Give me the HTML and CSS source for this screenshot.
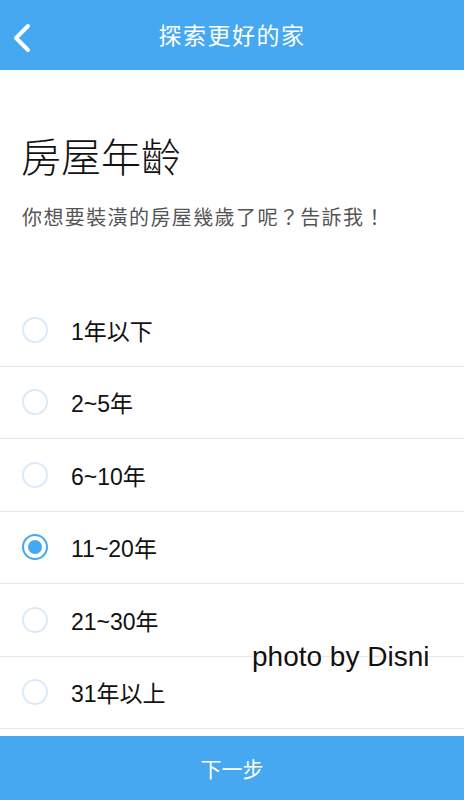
FILE: index.html
```html
<!DOCTYPE html>
<html>
  <head>
    <meta name="viewport" content="width=device-width, initial-scale=1.0" />
    <title>探索更好的家</title>
    <link rel="stylesheet" href="styles.css">
  </head>
  <body>
    <header class="topbar">
      <svg class="back" width="20" height="30" viewBox="0 0 20 30">
        <path d="M16 3 L4 15 L16 27" fill="none" stroke="#fff" stroke-width="4" stroke-linecap="round" stroke-linejoin="round" />
      </svg>
      <div class="topbar-title">探索更好的家</div>
    </header>

    <main class="content">
      <h1 class="title">房屋年齡</h1>
      <p class="subtitle">你想要裝潢的房屋幾歲了呢？告訴我！</p>

      <ul class="options">
        <li class="option"><span class="radio"></span>1年以下</li>
        <li class="option"><span class="radio"></span>2~5年</li>
        <li class="option"><span class="radio"></span>6~10年</li>
        <li class="option"><span class="radio checked"></span>11~20年</li>
        <li class="option"><span class="radio"></span>21~30年</li>
        <li class="option"><span class="radio"></span>31年以上</li>
      </ul>
      <div class="watermark">photo by Disni</div>
    </main>

    <footer class="next">下一步</footer>
  </body>
</html>
```

FILE: styles.css
```css
body {
  margin: 0;
  width: 464px;
  height: 800px;
  display: flex;
  flex-direction: column;
  background: #fff;
  font-family: "Liberation Sans", "Noto Sans CJK TC", sans-serif;
  color: #111;
  overflow: hidden;
}

.topbar {
  position: relative;
  height: 70px;
  background: #45a8f1;
  display: flex;
  align-items: center;
  justify-content: center;
}

.back {
  position: absolute;
  left: 12px;
  top: 23px;
}

.topbar-title {
  color: #fff;
  font-size: 23px;
  letter-spacing: 1.5px;
  margin-top: -2px;
}

.content {
  position: relative;
  flex: 1;
}

.title {
  margin: 58px 0 0 21px;
  font-size: 40px;
  font-weight: 300;
  line-height: 60px;
  color: #111;
}

.subtitle {
  margin: 17px 0 0 22px;
  font-size: 20px;
  line-height: 26px;
  color: #555;
  letter-spacing: 1.4px;
}

.options {
  list-style: none;
  margin: 63px 0 0;
  padding: 0;
}

.option {
  height: 72.5px;
  display: flex;
  align-items: center;
  font-size: 23px;
  border-bottom: 1.5px solid #e6e6e6;
  box-sizing: border-box;
}

.radio {
  width: 22px;
  height: 22px;
  border: 2px solid #d9ebfa;
  border-radius: 50%;
  margin: 0 23px 0 22px;
  box-sizing: content-box;
  position: relative;
}

.radio.checked {
  border-color: #45a8f1;
}

.radio.checked::after {
  content: "";
  position: absolute;
  left: 4px;
  top: 4px;
  width: 14px;
  height: 14px;
  border-radius: 50%;
  background: #45a8f1;
}

.watermark {
  position: absolute;
  left: 252px;
  top: 571px;
  font-size: 28px;
  color: #111;
  text-shadow: 1px 1px 0 #fff, -1px -1px 0 #fff;
}

.next {
  height: 64px;
  background: #45a8f1;
  color: #fff;
  font-size: 21px;
  display: flex;
  align-items: center;
  justify-content: center;
}
```
